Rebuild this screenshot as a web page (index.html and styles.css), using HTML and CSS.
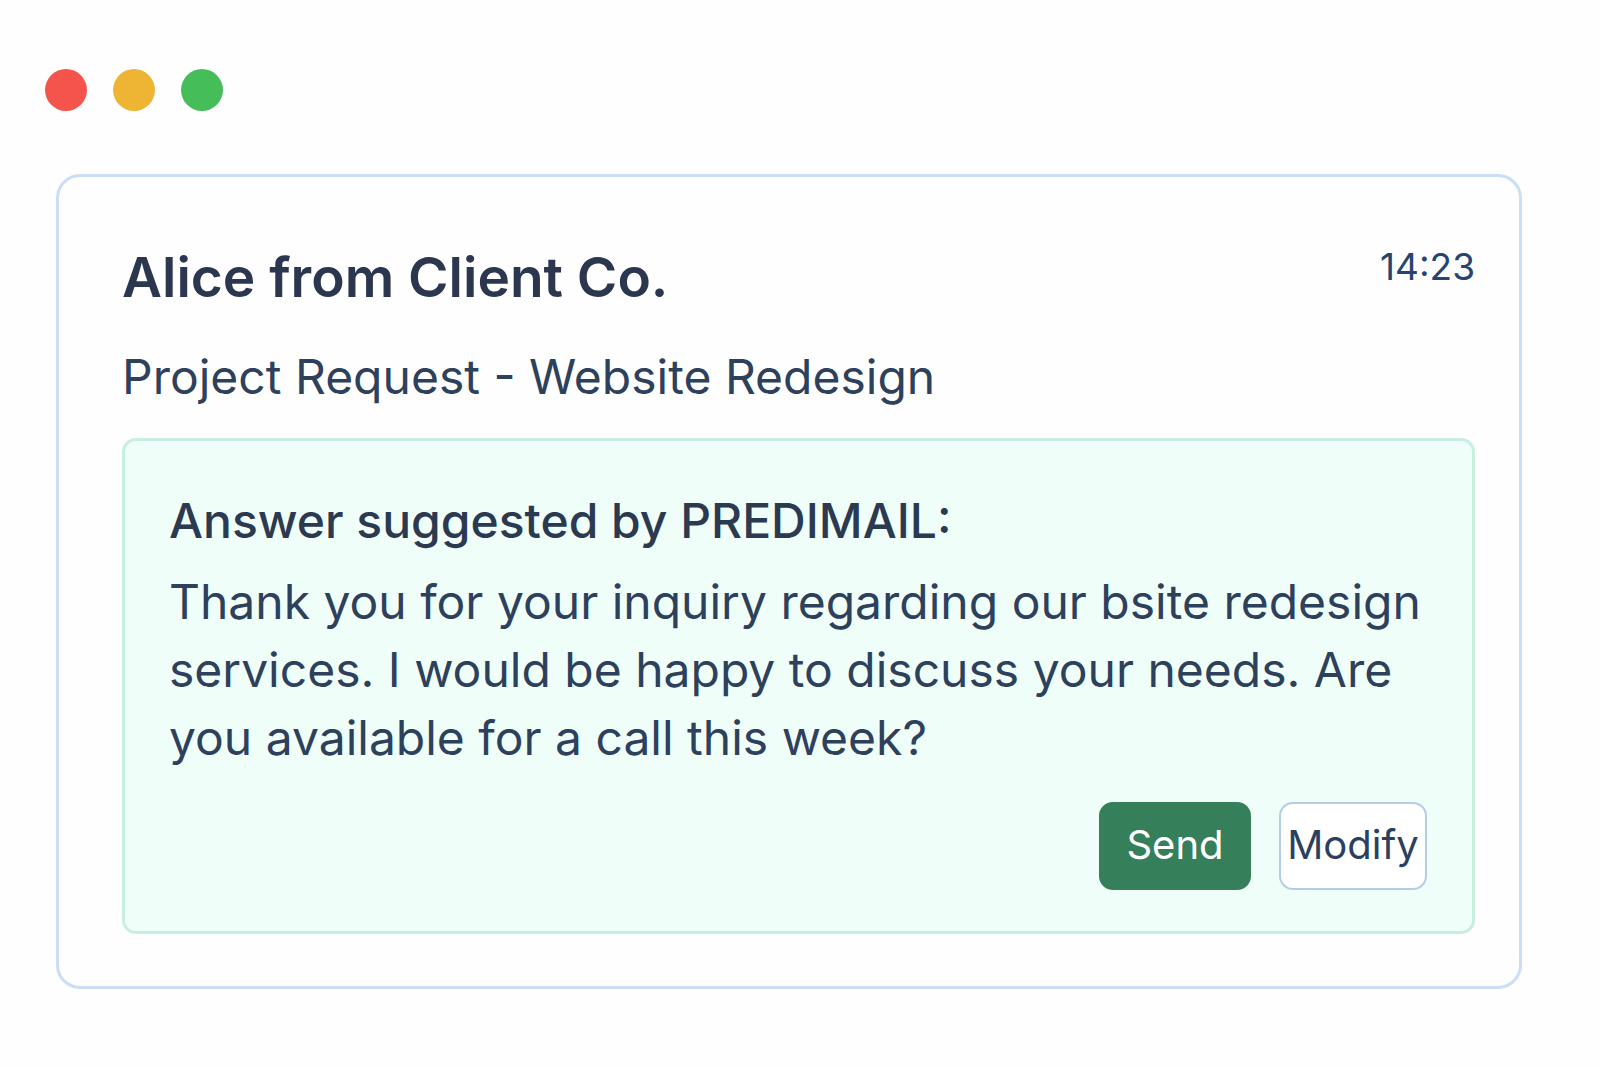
FILE: index.html
```html
<!DOCTYPE html>
<html lang="en">
<head>
    <meta charset="UTF-8">
    <meta name="viewport" content="width=device-width, initial-scale=1.0">
    <title>PREDIMAIL</title>
    <link rel="stylesheet" href="styles.css">
</head>
<body>
    <div class="window-dots">
        <span class="dot dot-red"></span>
        <span class="dot dot-yellow"></span>
        <span class="dot dot-green"></span>
    </div>
    <main class="email">
        <header class="email-header">
            <h1>Alice from Client Co.</h1>
            <time datetime="14:23">14:23</time>
        </header>
        <p class="subject">Project Request - Website Redesign</p>

        <section class="suggestion">
            <h2>Answer suggested by PREDIMAIL:</h2>
            <p class="answer">Thank you for your inquiry regarding our bsite redesign services. I would be happy to discuss your needs. Are you available for a call this week?</p>
            <div class="actions">
                <button type="button" class="btn-send">Send</button>
                <button type="button" class="btn-modify">Modify</button>
            </div>
        </section>
    </main>
</body>
</html>
```
FILE: styles.css
```css
* {
    box-sizing: border-box;
}
body {
    font-family: Inter, sans-serif;
    margin: 0;
    padding: 69px 78px 78px 45px;
    background-color: #fefefe;
    color: #2d405c;
}
h1, h2, p {
    margin: 0;
}
.window-dots {
    display: flex;
    gap: 26px;
    margin-bottom: 63px;
}
.dot {
    width: 42px;
    height: 42px;
    border-radius: 50%;
}
.dot-red {
    background-color: #f4544b;
}
.dot-yellow {
    background-color: #edb533;
}
.dot-green {
    background-color: #45be5a;
}
.email {
    margin-left: 11px;
    padding: 66px 44px 52px 63px;
    border: 3px solid #cbdef3;
    border-radius: 24px;
}
.email-header {
    display: flex;
    justify-content: space-between;
    align-items: flex-start;
    margin-bottom: 36px;
}
h1 {
    font-size: 55px;
    line-height: 68px;
    font-weight: 600;
    color: #2b364f;
}
time {
    font-size: 37px;
    line-height: 48px;
    color: #254470;
}
.subject {
    font-size: 48px;
    line-height: 60px;
    margin-bottom: 31px;
}
.suggestion {
    padding: 50px 45px 41px 44px;
    background-color: #effef9;
    border: 3px solid #c8eede;
    border-radius: 14px;
}
h2 {
    font-size: 48px;
    line-height: 60px;
    font-weight: 500;
    color: #2b3951;
    margin-bottom: 17px;
}
.answer {
    font-size: 48px;
    line-height: 68px;
}
.actions {
    display: flex;
    justify-content: flex-end;
    gap: 28px;
    margin-top: 30px;
}
button {
    height: 88px;
    padding: 0 0 4px;
    border: 2px solid #35805a;
    border-radius: 14px;
    font-family: inherit;
    font-size: 40px;
    cursor: pointer;
}
.btn-send {
    width: 152px;
    background-color: #35805a;
    color: white;
}
.btn-modify {
    width: 148px;
    background-color: white;
    border-color: #b3cde6;
    color: #2b3f60;
}
```
